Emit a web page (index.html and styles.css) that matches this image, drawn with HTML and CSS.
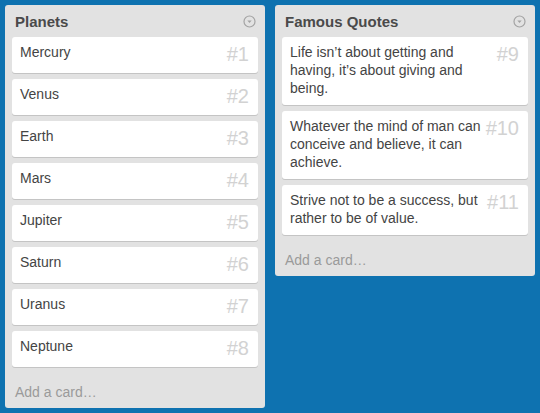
FILE: index.html
```html
<!DOCTYPE html>
<html>
<head>
<meta charset="utf-8">
<link rel="stylesheet" href="styles.css">
</head>
<body>
<div class="board">
  <div class="list">
    <div class="list-header">
      <span class="list-title">Planets</span>
      <svg class="menu-icon" width="13" height="13" viewBox="0 0 13 13"><circle cx="6.5" cy="6.5" r="5.5" fill="none" stroke="#a3a3a3" stroke-width="1.2"/><path d="M4.3 5.4 L8.7 5.4 L6.5 8 Z" fill="#a3a3a3"/></svg>
    </div>
    <div class="cards">
      <div class="card"><span class="num">#1</span>Mercury</div>
      <div class="card"><span class="num">#2</span>Venus</div>
      <div class="card"><span class="num">#3</span>Earth</div>
      <div class="card"><span class="num">#4</span>Mars</div>
      <div class="card"><span class="num">#5</span>Jupiter</div>
      <div class="card"><span class="num">#6</span>Saturn</div>
      <div class="card"><span class="num">#7</span>Uranus</div>
      <div class="card"><span class="num">#8</span>Neptune</div>
    </div>
    <div class="add-card">Add a card…</div>
  </div>
  <div class="list">
    <div class="list-header">
      <span class="list-title">Famous Quotes</span>
      <svg class="menu-icon" width="13" height="13" viewBox="0 0 13 13"><circle cx="6.5" cy="6.5" r="5.5" fill="none" stroke="#a3a3a3" stroke-width="1.2"/><path d="M4.3 5.4 L8.7 5.4 L6.5 8 Z" fill="#a3a3a3"/></svg>
    </div>
    <div class="cards">
      <div class="card"><span class="num">#9</span>Life isn’t about getting and having, it’s about giving and being.</div>
      <div class="card"><span class="num">#10</span>Whatever the mind of man can conceive and believe, it can achieve.</div>
      <div class="card"><span class="num">#11</span>Strive not to be a success, but rather to be of value.</div>
    </div>
    <div class="add-card">Add a card…</div>
  </div>
</div>
</body>
</html>
```
FILE: styles.css
```css
html, body {
  margin: 0;
  padding: 0;
  height: 100%;
}
body {
  background: #0e72b0;
  font-family: "Liberation Sans", Arial, sans-serif;
}
.board {
  display: flex;
  align-items: flex-start;
  gap: 10px;
  padding: 5px;
}
.list {
  width: 260px;
  box-sizing: border-box;
  background: #e2e2e2;
  border-radius: 3px;
  padding: 0 7px;
}
.list-header {
  height: 32px;
  display: flex;
  align-items: center;
  justify-content: space-between;
  padding: 0 2px 0 3px;
}
.list-title {
  font-size: 15px;
  font-weight: bold;
  color: #4a4a4a;
}
.menu-icon {
  display: block;
}
.cards {
  display: flex;
  flex-direction: column;
  gap: 6px;
}
.card {
  background: #fff;
  border-radius: 3px;
  box-shadow: 0 1px 0 #c4c4c4;
  padding: 6px 9px 8px 8px;
  font-size: 14px;
  line-height: 18px;
  color: #444;
  overflow: hidden;
}
.num {
  float: right;
  font-size: 20px;
  line-height: 22px;
  color: #d2d2d2;
  margin-left: 4px;
}
.add-card {
  padding: 10px 3px 7px;
  margin-top: 6px;
  font-size: 14px;
  line-height: 18px;
  color: #9a9a9a;
}
```
